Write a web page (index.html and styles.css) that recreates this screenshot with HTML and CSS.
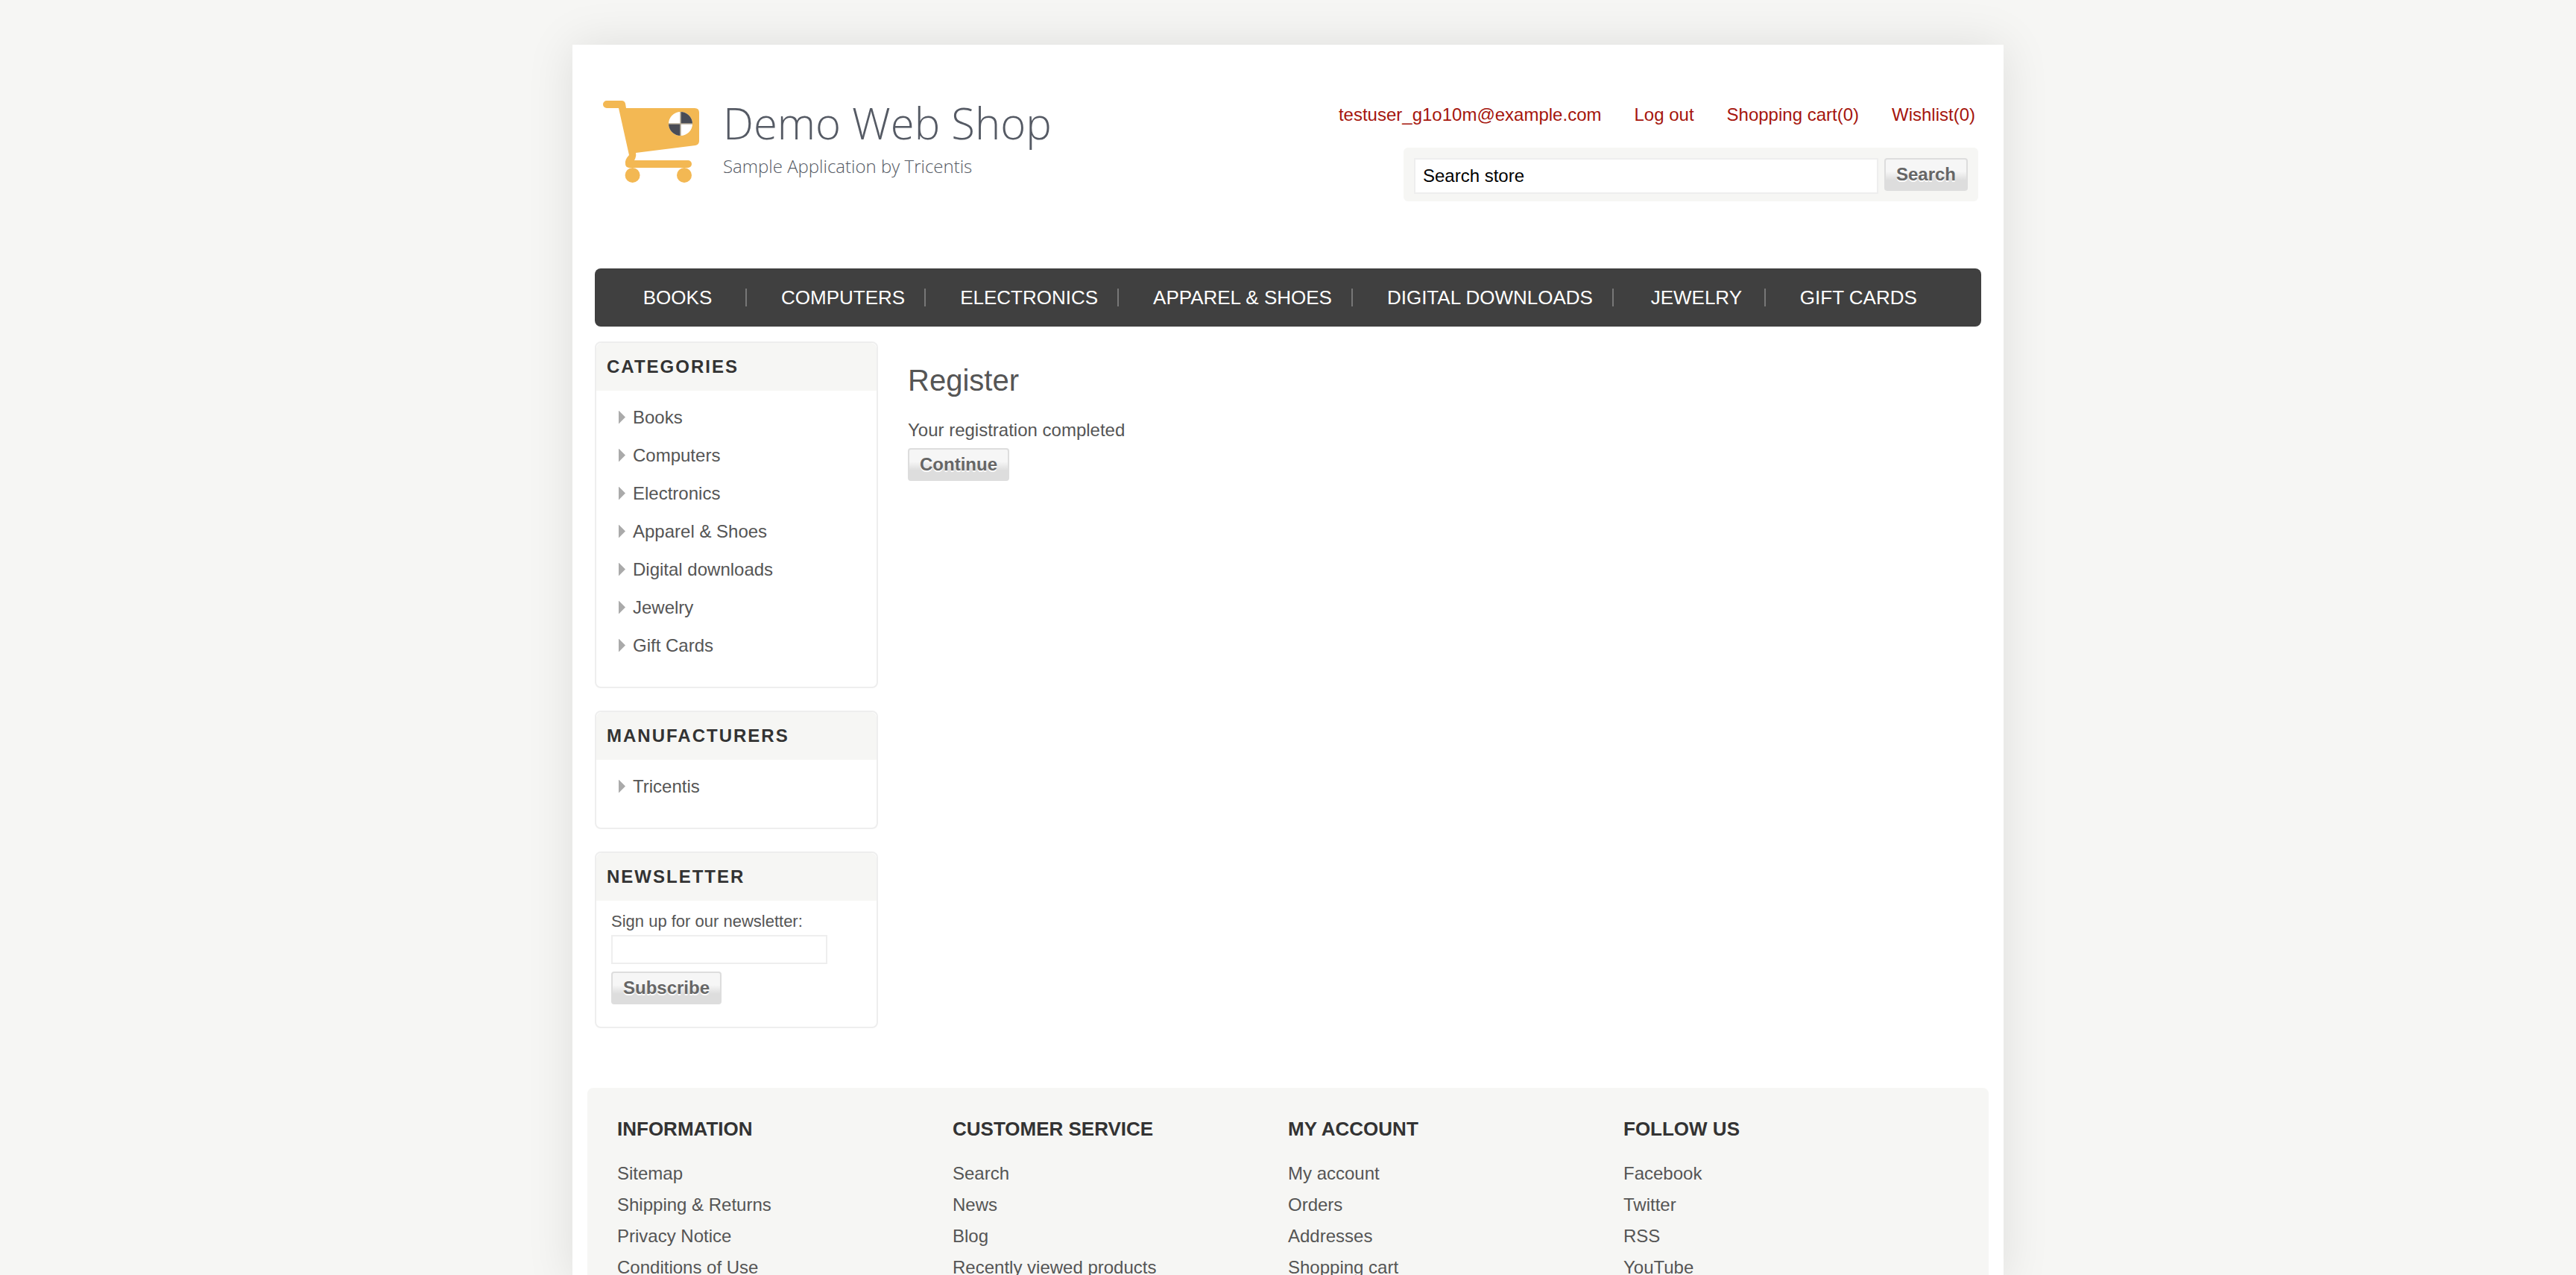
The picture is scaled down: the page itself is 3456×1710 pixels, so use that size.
FILE: index.html
```html
<!DOCTYPE html>
<html lang="en">
<head>
<meta charset="utf-8">
<title>Demo Web Shop. Register</title>
<link rel="stylesheet" href="styles.css">
</head>
<body>
<div class="page">
  <header class="header">
    <a class="logo" href="#">
      <svg class="logo-cart" viewBox="0 0 132 112" aria-hidden="true">
        <path d="M6 1H26Q30 1 31 5L32 11H124Q130 11 130 17V55Q130 60 125 61L45 71Q46 76 43 81H36L31 86Q30 80 36 74L22 11H6A5 5 0 0 1 6 1Z" fill="#f3b853"/>
        <path d="M36 86H115" fill="none" stroke="#f3b853" stroke-width="10" stroke-linecap="round"/>
        <circle cx="40.600" cy="101" r="10" fill="#f3b853"/>
        <circle cx="110" cy="101" r="10" fill="#f3b853"/>
        <circle cx="105" cy="32" r="16" fill="#fff"/>
        <path d="M105 32V16A16 16 0 0 1 121 32ZM105 32V48A16 16 0 0 1 89 32Z" fill="#494c56"/>
        <path d="M105 16V48M89 32H121" stroke="#b5ab98" stroke-width="1.500"/>
      </svg>
      <span class="logo-text">
        <span class="logo-name">Demo Web Shop</span>
        <span class="logo-tagline">Sample Application by Tricentis</span>
      </span>
    </a>
    <div class="header-side">
      <nav class="header-links" aria-label="Account">
        <a href="#">testuser_g1o10m@example.com</a>
        <a href="#">Log out</a>
        <a href="#">Shopping cart(0)</a>
        <a href="#">Wishlist(0)</a>
      </nav>
      <form class="search-box">
        <input class="search-input" type="text" value="Search store" aria-label="Search store">
        <button class="button" type="button">Search</button>
      </form>
    </div>
  </header>

  <nav class="menu" aria-label="Main menu">
    <a href="#"><span>BOOKS</span></a>
    <a href="#"><span>COMPUTERS</span></a>
    <a href="#"><span>ELECTRONICS</span></a>
    <a href="#"><span>APPAREL &amp; SHOES</span></a>
    <a href="#"><span>DIGITAL DOWNLOADS</span></a>
    <a href="#"><span>JEWELRY</span></a>
    <a href="#"><span>GIFT CARDS</span></a>
  </nav>

  <div class="columns">
    <aside class="sidebar">
      <section class="block">
        <h2 class="block-title">CATEGORIES</h2>
        <ul class="block-list">
          <li><a href="#">Books</a></li>
          <li><a href="#">Computers</a></li>
          <li><a href="#">Electronics</a></li>
          <li><a href="#">Apparel &amp; Shoes</a></li>
          <li><a href="#">Digital downloads</a></li>
          <li><a href="#">Jewelry</a></li>
          <li><a href="#">Gift Cards</a></li>
        </ul>
      </section>
      <section class="block">
        <h2 class="block-title">MANUFACTURERS</h2>
        <ul class="block-list">
          <li><a href="#">Tricentis</a></li>
        </ul>
      </section>
      <section class="block">
        <h2 class="block-title">NEWSLETTER</h2>
        <form class="newsletter">
          <label for="newsletter-email">Sign up for our newsletter:</label>
          <input class="newsletter-input" id="newsletter-email" type="text">
          <button class="button" type="button">Subscribe</button>
        </form>
      </section>
    </aside>
    <main class="content">
      <h1 class="content-title">Register</h1>
      <p class="content-text">Your registration completed</p>
      <button class="button" type="button">Continue</button>
    </main>
  </div>

  <footer class="footer">
    <section class="footer-column">
      <h3>INFORMATION</h3>
      <ul>
        <li><a href="#">Sitemap</a></li>
        <li><a href="#">Shipping &amp; Returns</a></li>
        <li><a href="#">Privacy Notice</a></li>
        <li><a href="#">Conditions of Use</a></li>
      </ul>
    </section>
    <section class="footer-column">
      <h3>CUSTOMER SERVICE</h3>
      <ul>
        <li><a href="#">Search</a></li>
        <li><a href="#">News</a></li>
        <li><a href="#">Blog</a></li>
        <li><a href="#">Recently viewed products</a></li>
      </ul>
    </section>
    <section class="footer-column">
      <h3>MY ACCOUNT</h3>
      <ul>
        <li><a href="#">My account</a></li>
        <li><a href="#">Orders</a></li>
        <li><a href="#">Addresses</a></li>
        <li><a href="#">Shopping cart</a></li>
      </ul>
    </section>
    <section class="footer-column">
      <h3>FOLLOW US</h3>
      <ul>
        <li><a href="#">Facebook</a></li>
        <li><a href="#">Twitter</a></li>
        <li><a href="#">RSS</a></li>
        <li><a href="#">YouTube</a></li>
      </ul>
    </section>
  </footer>
</div>
</body>
</html>
```
FILE: styles.css
```css
* {
  box-sizing: border-box;
}

body {
  margin: 0;
  background: #f6f6f4;
  color: #555;
  font: 24px/28px "Liberation Sans", Arial, sans-serif;
}

a {
  color: inherit;
  text-decoration: none;
}

h1, h2, h3, p, ul {
  margin: 0;
  padding: 0;
  font-weight: normal;
}

ul {
  list-style: none;
}

.page {
  max-width: 1920px;
  margin: 60px auto 0;
  padding: 0 20px;
  background: #fff;
  box-shadow: 0 0 60px rgba(0, 0, 0, 0.1);
}

.header {
  display: flex;
  justify-content: space-between;
  align-items: flex-start;
  height: 300px;
  padding: 74px 14px 0 20px;
}

/* Logo */
.logo {
  display: flex;
  gap: 30px;
}

.logo-cart {
  width: 132px;
  height: 112px;
}

.logo-text {
  display: flex;
  flex-direction: column;
  font-family: "Open Sans", sans-serif;
  font-weight: 300;
  color: #555a64;
}

.logo-name {
  font-size: 58px;
  line-height: 62px;
}

.logo-tagline {
  font-size: 24px;
  line-height: 54px;
}

/* Account links and search */
.header-side {
  display: flex;
  flex-direction: column;
  align-items: flex-end;
  gap: 30px;
  padding-top: 6px;
}

.header-links {
  display: flex;
  gap: 44px;
  padding-right: 4px;
  color: #a5150d;
}

.search-box {
  display: flex;
  align-items: flex-start;
  gap: 8px;
  padding: 14px 14px 10px;
  border-radius: 6px;
  background: #f6f6f4;
}

.search-input {
  width: 623px;
  height: 48px;
  padding: 0 10px;
  border: 2px solid #eee;
  background: #fff;
  color: #000;
  font: inherit;
}

.button {
  height: 44px;
  padding: 0 14px;
  border: 2px solid #ddd;
  border-radius: 4px;
  background: linear-gradient(#f6f6f6 40%, #ddd 70%);
  color: #666;
  font: bold 24px/36px "Liberation Sans", Arial, sans-serif;
  text-shadow: 0 2px 0 #fff;
}

/* Main menu */
.menu {
  display: flex;
  align-items: center;
  height: 78px;
  margin: 0 10px;
  border-radius: 8px;
  background: #404040;
  color: #fff;
  font-size: 26px;
  line-height: 24px;
}

.menu a {
  padding: 0 26px 0 46px;
  border-right: 2px solid #777;
}

.menu a:last-child {
  border-right: 0;
}

.menu span {
  display: block;
  min-width: 130px;
  text-align: center;
}

/* Columns */
.columns {
  display: flex;
  gap: 40px;
  padding: 20px 10px 80px;
}

.sidebar {
  display: flex;
  flex-direction: column;
  flex: 0 0 380px;
  gap: 30px;
}

.block {
  border: 2px solid #eee;
  border-radius: 8px;
}

.block-title {
  padding: 18px 14px;
  border-radius: 8px 8px 0 0;
  background: #f6f6f4;
  color: #333;
  font-size: 24px;
  font-weight: bold;
  letter-spacing: 2px;
}

.block-list {
  padding: 10px 30px 30px;
}

.block-list li {
  display: flex;
  align-items: center;
  gap: 10px;
  line-height: 51px;
}

.block-list li::before {
  content: "";
  width: 9px;
  height: 18px;
  background: #aaa;
  clip-path: polygon(0 0, 100% 50%, 0 100%);
}

.newsletter {
  display: flex;
  flex-direction: column;
  align-items: flex-start;
  padding: 14px 20px 30px;
}

.newsletter label {
  font-size: 22px;
}

.newsletter-input {
  width: 290px;
  height: 39px;
  margin: 4px 0 10px;
  padding: 0 8px;
  border: 2px solid #eee;
  background: #fff;
  font: inherit;
}

.content {
  padding-top: 28px;
}

.content-title {
  font-size: 40px;
  line-height: 48px;
}

.content-text {
  margin: 29px 0 10px;
}

/* Footer */
.footer {
  display: flex;
  padding: 41px 40px 0;
  border-radius: 8px 8px 0 0;
  background: #f6f6f4;
}

.footer-column {
  flex: 1;
}

.footer-column h3 {
  margin-bottom: 25px;
  color: #333;
  font-size: 26px;
  font-weight: bold;
}

.footer-column li {
  line-height: 42px;
}
```
